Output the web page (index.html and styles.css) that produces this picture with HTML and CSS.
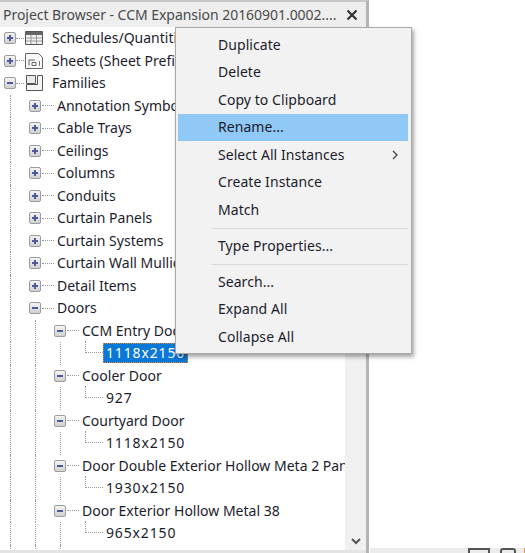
FILE: index.html
```html
<!DOCTYPE html>
<html lang="en">
<head>
<meta charset="utf-8">
<title>Project Browser</title>
<link rel="stylesheet" href="styles.css">
</head>
<body>
<div class="screen">
  <section class="browser">
    <header class="titlebar">
      <span class="title">Project Browser - CCM Expansion 20160901.0002....</span>
      <svg class="close" viewBox="0 0 12 12" width="12" height="12"><path d="M1.500 1.500l9 9M10.500 1.500l-9 9" stroke="#333" stroke-width="2.200" fill="none"/></svg>
    </header>
    <div class="body">
      <div class="tree">
        <div class="row"><span class="tog plus"></span><span class="dash short"></span>
          <svg class="ico" viewBox="0 0 20 18" width="20" height="18"><path d="M1.500 2.500h17v13h-17z" fill="#f2f2f2" stroke="#555"/><path d="M1.500 3h17v3h-17z" fill="#666"/><path d="M2 9h16M2 12h16M7 6v9M12.500 6v9" stroke="#9a9a9a" fill="none"/></svg>
          <span class="lbl l0">Schedules/Quantities (all)</span></div>
        <div class="row"><span class="tog plus"></span><span class="dash short"></span>
          <svg class="ico" viewBox="0 0 20 18" width="20" height="18"><path d="M1.500 1.500h13l4 4v11h-17z" fill="#f8f8f8" stroke="#666"/><path d="M5 13.500V8h6M8 13.500v-3h4v3z" stroke="#666" fill="none"/><path d="M15.500 9v5" stroke="#777" fill="none"/></svg>
          <span class="lbl l0">Sheets (Sheet Prefix)</span></div>
        <div class="row"><span class="tog minus"></span><span class="dash short"></span>
          <svg class="ico" viewBox="0 0 20 18" width="20" height="18"><path d="M13.500 1.500h5v15h-16v-6h11z" fill="#f4f4f4" stroke="#555"/><path d="M2.500 1.500h9v8h-9z" fill="#eaeaea" stroke="#555"/></svg>
          <span class="lbl l0">Families</span></div>

        <div class="row"><i class="guide"></i><span class="tog plus"></span><span class="dash"></span><span class="lbl">Annotation Symbols</span></div>
        <div class="row"><i class="guide"></i><span class="tog plus"></span><span class="dash"></span><span class="lbl">Cable Trays</span></div>
        <div class="row"><i class="guide"></i><span class="tog plus"></span><span class="dash"></span><span class="lbl">Ceilings</span></div>
        <div class="row"><i class="guide"></i><span class="tog plus"></span><span class="dash"></span><span class="lbl">Columns</span></div>
        <div class="row"><i class="guide"></i><span class="tog plus"></span><span class="dash"></span><span class="lbl">Conduits</span></div>
        <div class="row"><i class="guide"></i><span class="tog plus"></span><span class="dash"></span><span class="lbl">Curtain Panels</span></div>
        <div class="row"><i class="guide"></i><span class="tog plus"></span><span class="dash"></span><span class="lbl">Curtain Systems</span></div>
        <div class="row"><i class="guide"></i><span class="tog plus"></span><span class="dash"></span><span class="lbl">Curtain Wall Mullions</span></div>
        <div class="row"><i class="guide"></i><span class="tog plus"></span><span class="dash"></span><span class="lbl">Detail Items</span></div>
        <div class="row"><i class="guide"></i><span class="tog minus"></span><span class="dash"></span><span class="lbl">Doors</span></div>

        <div class="row"><i class="guide"></i><i class="guide"></i><span class="tog minus"></span><span class="dash"></span><span class="lbl">CCM Entry Door</span></div>
        <div class="row"><i class="guide"></i><i class="guide"></i><i class="guide"></i><span class="elbow"></span><span class="lbl leaf selected">1118x2150</span></div>
        <div class="row"><i class="guide"></i><i class="guide"></i><span class="tog minus"></span><span class="dash"></span><span class="lbl">Cooler Door</span></div>
        <div class="row"><i class="guide"></i><i class="guide"></i><i class="guide"></i><span class="elbow"></span><span class="lbl leaf">927</span></div>
        <div class="row"><i class="guide"></i><i class="guide"></i><span class="tog minus"></span><span class="dash"></span><span class="lbl">Courtyard Door</span></div>
        <div class="row"><i class="guide"></i><i class="guide"></i><i class="guide"></i><span class="elbow"></span><span class="lbl leaf">1118x2150</span></div>
        <div class="row"><i class="guide"></i><i class="guide"></i><span class="tog minus"></span><span class="dash"></span><span class="lbl">Door Double Exterior Hollow Meta 2 Panel</span></div>
        <div class="row"><i class="guide"></i><i class="guide"></i><i class="guide"></i><span class="elbow"></span><span class="lbl leaf">1930x2150</span></div>
        <div class="row"><i class="guide"></i><i class="guide"></i><span class="tog minus"></span><span class="dash"></span><span class="lbl">Door Exterior Hollow Metal 38</span></div>
        <div class="row"><i class="guide"></i><i class="guide"></i><i class="guide"></i><span class="elbow"></span><span class="lbl leaf">965x2150</span></div>
        <div class="row"><i class="guide"></i><i class="guide"></i><i class="guide"></i></div>
      </div>
      <div class="scrollbar">
        <svg viewBox="0 0 10 7" width="10" height="7"><path d="M1 1l4 4 4-4" stroke="#555" stroke-width="2" fill="none"/></svg>
      </div>
    </div>
  </section>
  <div class="canvas">
    <div class="status">
      <span class="stat-a"></span><span class="stat-b"></span><span class="stat-c"></span>
    </div>
  </div>
</div>

<nav class="menu">
  <div class="item">Duplicate</div>
  <div class="item">Delete</div>
  <div class="item">Copy to Clipboard</div>
  <div class="item active">Rename...</div>
  <div class="item sub">Select All Instances
    <svg viewBox="0 0 6 10" width="6" height="10"><path d="M1 1l4 4-4 4" stroke="#444" stroke-width="1.300" fill="none"/></svg>
  </div>
  <div class="item">Create Instance</div>
  <div class="item">Match</div>
  <div class="sep"></div>
  <div class="item">Type Properties...</div>
  <div class="sep"></div>
  <div class="item">Search...</div>
  <div class="item">Expand All</div>
  <div class="item">Collapse All</div>
</nav>
</body>
</html>
```

FILE: styles.css
```css
* { box-sizing: border-box; }
html, body { margin: 0; height: 100%; background: #fff; overflow: hidden; }
body { font: 14px/1 "Noto Sans", "Open Sans", sans-serif; color: #1c1c2c; }

.screen { display: flex; width: 525px; height: 553px; }

.browser {
  width: 369px;
  display: flex;
  flex-direction: column;
  border-right: 3px solid #b4b4b4;
  border-top: 2px solid #c8c8c8;
}
.titlebar {
  height: 25px;
  flex: none;
  display: flex;
  align-items: center;
  justify-content: space-between;
  padding: 0 8px 0 3px;
  background: #eeeeee;
  color: #4a4a4a;
}
.title { white-space: nowrap; letter-spacing: -.04px; }
.close { flex: none; }

.body { flex: 1; display: flex; min-height: 0; border-bottom: 3px solid #e4e4e4; }
.tree { width: 345px; padding: 0 0 0 10px; overflow: hidden; }
.row { display: flex; align-items: center; height: 22.5px; white-space: nowrap; }

.guide {
  flex: none;
  align-self: stretch;
  width: 25px;
  border-left: 1px dotted #9a9a9a;
}
.tog {
  flex: none;
  width: 12px;
  height: 12px;
  margin-left: -6px;
  border: 1px solid #9c9c9c;
  border-radius: 2px;
  background: linear-gradient(#f4f4f4, #d0d0d0);
  position: relative;
}
.tog::before {
  content: "";
  position: absolute;
  left: 2px;
  right: 2px;
  top: 4px;
  height: 2px;
  background: #4a5a9a;
}
.plus::after {
  content: "";
  position: absolute;
  top: 2px;
  bottom: 2px;
  left: 4px;
  width: 2px;
  background: #4a5a9a;
}
.dash { flex: none; width: 12px; margin: 0 3px 0 1px; border-top: 1px dotted #9a9a9a; }
.dash.short { width: 8px; margin: 0; }
.ico { flex: none; margin-right: 8px; }
.elbow {
  flex: none;
  width: 18px;
  height: 12px;
  margin-top: -12px;
  border-left: 1px dotted #9a9a9a;
  border-bottom: 1px dotted #9a9a9a;
}
.lbl { line-height: 20px; }
.leaf { padding: 0 3px; letter-spacing: .85px; }
.selected {
  background: #0a78d7;
  color: #fff;
  outline: 1px dotted #e08a30;
  outline-offset: -1px;
}

.scrollbar {
  width: 21px;
  background: #f0f0f0;
  display: flex;
  flex-direction: column;
  justify-content: flex-end;
  align-items: center;
  padding-bottom: 5px;
}

.canvas { flex: 1; display: flex; flex-direction: column; justify-content: flex-end; }
.status {
  height: 5px;
  margin-left: 1px;
  background: #ececec;
  display: flex;
  gap: 10px;
  padding-left: 98px;
  overflow: hidden;
}
.stat-a { width: 22px; height: 8px; border: 2px solid #555; }
.stat-b { width: 16px; height: 8px; border: 2px solid #555; border-radius: 3px; }
.stat-c { width: 3px; height: 5px; margin-left: -2px; background: #e0a040; }

.menu {
  position: absolute;
  left: 175px;
  top: 27px;
  width: 237px;
  height: 327px;
  padding: 3px 3px 2px 2px;
  background: #f2f2f2;
  border: 1px solid #a8a8a8;
  box-shadow: 2px 3px 4px rgba(0, 0, 0, .35);
}
.item {
  height: 27.5px;
  padding-left: 40px;
  padding-right: 10px;
  display: flex;
  align-items: center;
  justify-content: space-between;
  white-space: nowrap;
  letter-spacing: .06px;
}
.active { background: #90c8f6; }
.sep { height: 8.5px; margin-left: 34px; position: relative; }
.sep::before { content: ""; position: absolute; left: 0; right: 0; top: 4px; height: 1px; background: #d8d8d8; }
```
